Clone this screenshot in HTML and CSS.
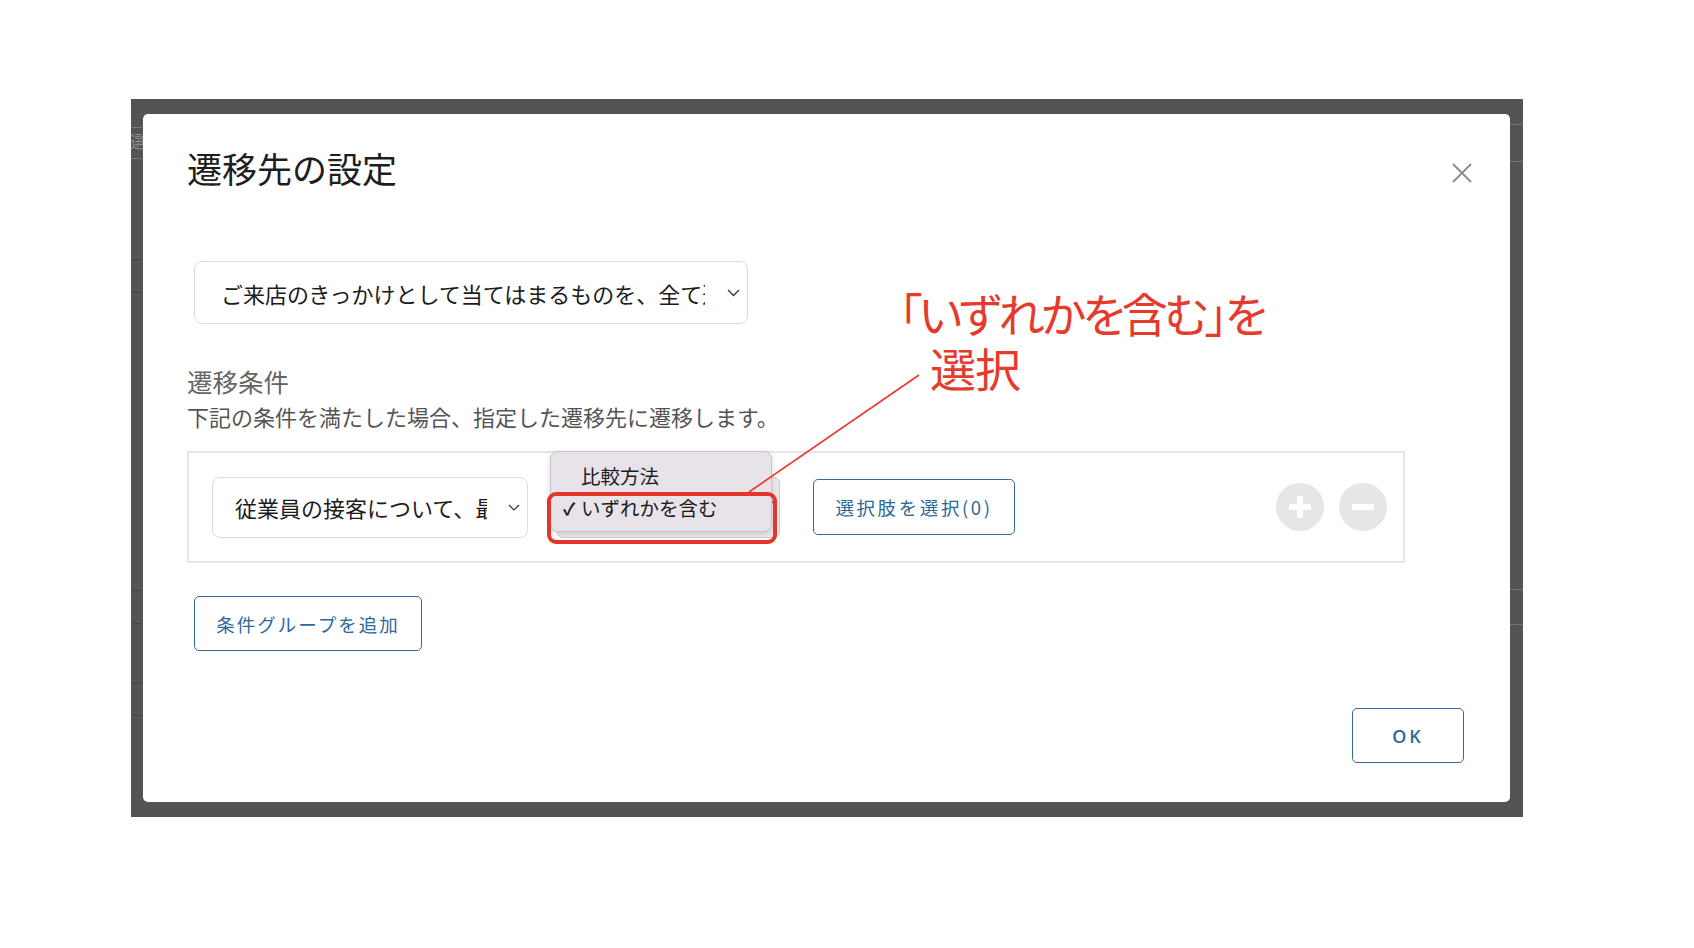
FILE: index.html
```html
<!DOCTYPE html>
<html lang="ja">
<head>
    <meta charset="UTF-8">
    <meta name="viewport" content="width=device-width, initial-scale=1.0">
    <title>遷移先の設定</title>
    <link rel="stylesheet" href="styles.css">
</head>
<body>
    <div class="screen">
        <!-- 背景ページの名残り -->
        <div class="bg-line bg-left-1"></div>
        <div class="bg-line bg-left-2"></div>
        <span class="bg-char">選</span>
        <div class="bg-line bg-right-1"></div>
        <div class="bg-line bg-right-2"></div>
        <div class="bg-line bg-right-3"></div>
        <div class="bg-line bg-right-4"></div>
        <div class="bg-circle bg-circle-1"></div>
        <div class="bg-circle bg-circle-2"></div>
        <div class="bg-circle bg-circle-3"></div>

        <div class="modal">
            <div class="modal-header">
                <h2 class="modal-title">遷移先の設定</h2>
                <button type="button" class="close-btn" aria-label="閉じる">
                    <svg width="20" height="20" viewBox="0 0 20 20"><path d="M1 1L19 19M19 1L1 19" stroke="#8a8a8a" stroke-width="1.8" fill="none"/></svg>
                </button>
            </div>

            <div class="select select-question">
                <span class="select-text">ご来店のきっかけとして当てはまるものを、全て選んでください</span>
                <svg class="chevron" width="13" height="8" viewBox="0 0 13 8"><polyline points="1,1 6.5,6.5 12,1" stroke="#333" stroke-width="1.3" fill="none"/></svg>
            </div>

            <div class="section-label">遷移条件</div>
            <div class="section-desc">下記の条件を満たした場合、指定した遷移先に遷移します。</div>

            <div class="condition-box">
                <div class="select select-item">
                    <span class="select-text">従業員の接客について、最も当てはまるもの</span>
                    <svg class="chevron" width="12" height="7" viewBox="0 0 12 7"><polyline points="1,1 6,6 11,1" stroke="#333" stroke-width="1.2" fill="none"/></svg>
                </div>

                <div class="compare">
                    <div class="compare-select"><span class="compare-caret">⌃</span></div>
                    <div class="popup">
                        <div class="popup-row">比較方法</div>
                        <div class="popup-row"><span class="check">✓</span>いずれかを含む</div>
                    </div>
                    <div class="highlight"></div>
                </div>

                <button type="button" class="btn-outline btn-choices">選択肢を選択(0)</button>

                <div class="round-btns">
                    <div class="round-btn"><span class="bar-h"></span><span class="bar-v"></span></div>
                    <div class="round-btn"><span class="bar-h"></span></div>
                </div>
            </div>

            <button type="button" class="btn-outline btn-add">条件グループを追加</button>

            <div class="modal-footer">
                <button type="button" class="btn-outline btn-ok">OK</button>
            </div>
        </div>
    </div>

    <div class="annotation">
        <div class="note-line note-first">「いずれかを含む」を</div>
        <div class="note-line note-indent">選択</div>
    </div>
    <svg class="pointer" width="1694" height="948" viewBox="0 0 1694 948">
        <line x1="919" y1="375" x2="749" y2="492" stroke="#e63a2c" stroke-width="1.6"/>
    </svg>
</body>
</html>
```

FILE: styles.css
```css
body {
    margin: 0;
    padding: 99px 0 0 131px;
    background: #fff;
    font-family: "Noto Sans CJK JP", "Noto Sans", sans-serif;
    color: #222;
}
button {
    font-family: inherit;
    background: #fff;
    cursor: pointer;
}
.screen {
    position: relative;
    width: 1392px;
    height: 718px;
    box-sizing: border-box;
    padding: 15px 13px 15px 12px;
    background-color: #545454;
    overflow: hidden;
}
.bg-line {
    position: absolute;
    width: 13px;
    height: 1px;
    background-color: #747474;
}
.bg-left-1 { left: 0; top: 28px; }
.bg-left-2 { left: 0; top: 59px; }
.bg-right-1 { right: 0; top: 25px; }
.bg-right-2 { right: 0; top: 62px; }
.bg-right-3 { right: 0; top: 490px; }
.bg-right-4 { right: 0; top: 525px; }
.bg-char {
    position: absolute;
    left: -1px;
    top: 30px;
    font-size: 17px;
    line-height: 24px;
    color: #8a8a8a;
}
.bg-circle {
    position: absolute;
    left: -10px;
    width: 32px;
    height: 32px;
    border: 1px solid #444;
    border-radius: 50%;
}
.bg-circle-1 { top: 160px; }
.bg-circle-2 { top: 491px; }
.bg-circle-3 { top: 583px; }

.modal {
    position: relative;
    z-index: 1;
    height: 100%;
    box-sizing: border-box;
    padding: 30px 46px 39px 44px;
    background-color: #fff;
    border-radius: 5px;
    display: flex;
    flex-direction: column;
    align-items: flex-start;
}
.modal-header {
    align-self: stretch;
    display: flex;
    justify-content: space-between;
    align-items: center;
    height: 48px;
}
.modal-title {
    margin: 0;
    font-size: 35px;
    font-weight: 400;
    line-height: 48px;
    color: #1e1e1e;
}
.close-btn {
    width: 20px;
    height: 20px;
    padding: 0;
    margin: 10px -8px 0 0;
    border: none;
    background: none;
}
.close-btn svg {
    display: block;
}

.select {
    display: flex;
    align-items: center;
    box-sizing: border-box;
    background-color: #fff;
    border: 1.5px solid #d9dde5;
    border-radius: 8px;
}
.select-text {
    overflow: hidden;
    white-space: nowrap;
    font-size: 22px;
    color: #1c1c1c;
}
.select-question {
    width: 554px;
    height: 63px;
    margin: 69px 0 0 7px;
    padding-left: 26px;
}
.select-question .select-text {
    width: 484px;
    margin-right: 22px;
}
.select-item {
    width: 316px;
    height: 61px;
    padding-left: 22px;
}
.select-item .select-text {
    width: 252px;
    margin-right: 21px;
}

.section-label {
    margin-top: 40px;
    font-size: 25.5px;
    line-height: 33px;
    color: #666;
}
.section-desc {
    margin-top: 4px;
    font-size: 22px;
    line-height: 30px;
    color: #555;
}

.condition-box {
    display: flex;
    align-items: center;
    width: 1218px;
    height: 112px;
    box-sizing: border-box;
    margin-top: 20px;
    padding: 0 16px 0 23px;
    border: 2px solid #e3e6eb;
}
.compare {
    position: relative;
    width: 223px;
    height: 61px;
    margin-left: 29px;
}
.compare-select {
    height: 100%;
    box-sizing: border-box;
    background-color: #ece9ee;
    border: 1px solid #cbcbcb;
    border-radius: 6px;
}
.compare-caret {
    position: absolute;
    right: 3px;
    top: 22px;
    font-size: 12px;
    line-height: 12px;
    color: #555;
}
.popup {
    position: absolute;
    left: -7px;
    top: -26px;
    width: 222px;
    height: 81px;
    box-sizing: border-box;
    padding: 8px 0 0 12px;
    background-color: #e7e3e9;
    border: 1px solid #c6c4c9;
    border-radius: 8px;
    box-shadow: 0 2px 6px rgba(0, 0, 0, 0.15);
}
.popup-row {
    display: flex;
    align-items: center;
    height: 32px;
    padding-left: 18px;
    font-size: 19.5px;
    color: #1c1c1c;
}
.check {
    width: 18px;
    margin-left: -18px;
    font-size: 17px;
    font-weight: 700;
}
.highlight {
    position: absolute;
    left: -10px;
    top: 15px;
    width: 230px;
    height: 52px;
    box-sizing: border-box;
    border: 4px solid #e3352a;
    border-radius: 9px;
}

.btn-outline {
    box-sizing: border-box;
    border: 1.5px solid #36699a;
    border-radius: 5px;
    color: #2e6898;
    font-size: 18.5px;
    letter-spacing: 2px;
    padding: 0;
}
.btn-choices {
    width: 202px;
    height: 56px;
    margin-left: 33px;
    letter-spacing: 2.6px;
}
.round-btns {
    display: flex;
    gap: 15px;
    margin-left: auto;
}
.round-btn {
    position: relative;
    width: 48px;
    height: 48px;
    border-radius: 50%;
    background-color: #e6e6e6;
}
.bar-h, .bar-v {
    position: absolute;
    left: 50%;
    top: 50%;
    background-color: #fff;
    border-radius: 1px;
}
.bar-h {
    width: 22px;
    height: 6px;
    margin: -3px 0 0 -11px;
}
.bar-v {
    width: 6px;
    height: 22px;
    margin: -11px 0 0 -3px;
}
.btn-add {
    width: 228px;
    height: 55px;
    margin: 33px 0 0 7px;
}
.modal-footer {
    align-self: stretch;
    display: flex;
    justify-content: flex-end;
    margin-top: auto;
}
.btn-ok {
    width: 112px;
    height: 55px;
    font-family: "Open Sans", sans-serif;
    font-size: 18px;
    font-weight: 600;
    letter-spacing: 3px;
}

.annotation {
    position: absolute;
    z-index: 5;
    left: 899px;
    top: 285px;
    color: #e63a2c;
    font-size: 46px;
    line-height: 55px;
    font-feature-settings: "palt";
}
.note-first {
    letter-spacing: -3.2px;
}
.note-indent {
    padding-left: 31px;
    letter-spacing: -1px;
}
.pointer {
    position: absolute;
    z-index: 5;
    left: 0;
    top: 0;
    pointer-events: none;
}
```
